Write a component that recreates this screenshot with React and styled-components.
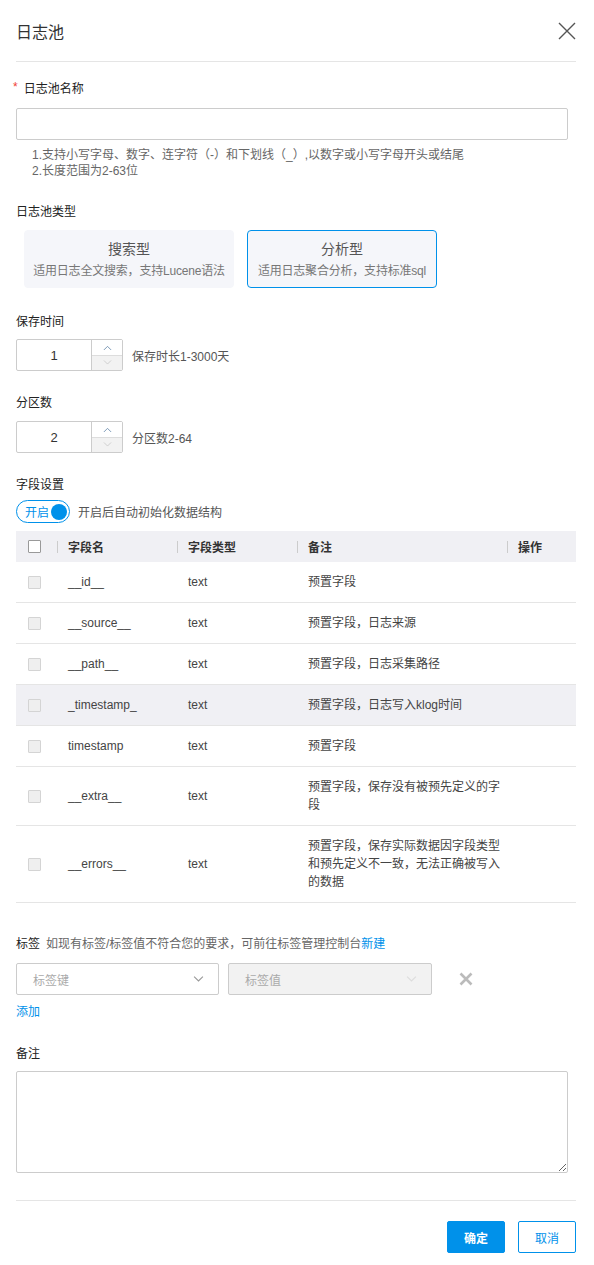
import React from "react";
import styled, { createGlobalStyle } from "styled-components";

const BLUE = "#0091ea";

const GlobalStyle = createGlobalStyle`
  html, body {
    margin: 0;
    padding: 0;
    background: #fff;
  }
  body {
    font-family: "Liberation Sans", "Noto Sans CJK SC", sans-serif;
    font-size: 12px;
    color: #333;
  }
  * {
    box-sizing: border-box;
  }
`;

const Dialog = styled.div`
  width: 594px;
  padding: 0 18px 13px 16px;
`;

const Header = styled.div`
  height: 62px;
  display: flex;
  align-items: center;
  justify-content: space-between;
  border-bottom: 1px solid #e5e5e5;
`;

const Title = styled.h2`
  margin: 0;
  font-size: 16px;
  font-weight: normal;
  color: #333;
`;

const CloseButton = styled.button`
  border: 0;
  background: none;
  padding: 0;
  margin-right: -2px;
  width: 22px;
  height: 22px;
  display: flex;
  align-items: center;
  justify-content: center;
  cursor: pointer;
`;

const Body = styled.div`
  padding-top: 18px;
`;

const FormItem = styled.div`
  margin-top: ${({ $gap }) => $gap || 0}px;
`;

const Label = styled.div`
  line-height: 18px;
  font-size: 12px;
  color: #222;
  margin-bottom: ${({ $mb }) => $mb ?? 9}px;
  display: flex;
  align-items: center;
`;

const Required = styled.span`
  color: #f04134;
  margin-left: -3px;
  margin-right: 6px;
  font-size: 12px;
  position: relative;
  top: -2px;
`;

const TextInput = styled.input`
  display: block;
  width: 552px;
  height: 32px;
  border: 1px solid #ccc;
  border-radius: 2px;
  outline: none;
  padding: 0 10px;
  font: inherit;
`;

const Help = styled.div`
  margin-top: 7px;
  padding-left: 16px;
  color: #666;
  line-height: 16px;
`;

const Cards = styled.div`
  display: flex;
  gap: 13px;
  padding-left: 8px;
`;

const TypeCard = styled.div`
  width: ${({ $w }) => $w}px;
  height: 58px;
  padding: 0 4px;
  border-radius: 4px;
  background: #f5f6fa;
  border: 1px solid ${({ $active }) => ($active ? BLUE : "#f5f6fa")};
  display: flex;
  flex-direction: column;
  align-items: center;
  justify-content: center;
  gap: 5px;
  white-space: nowrap;
`;

const CardTitle = styled.div`
  font-size: 14px;
  color: #555;
  line-height: 18px;
`;

const CardDesc = styled.div`
  font-size: 12px;
  color: #777;
  line-height: 16px;
  letter-spacing: -0.2px;
`;

const InlineRow = styled.div`
  display: flex;
  align-items: center;
  gap: ${({ $gap }) => $gap || 9}px;
`;

const NumberBox = styled.div`
  width: 107px;
  height: 32px;
  border: 1px solid #ccc;
  border-radius: 2px;
  display: flex;
`;

const NumberValue = styled.div`
  flex: 1;
  display: flex;
  align-items: center;
  justify-content: center;
  font-size: 13px;
  color: #333;
`;

const Spinner = styled.div`
  width: 31px;
  border-left: 1px solid #ccc;
  display: flex;
  flex-direction: column;
`;

const SpinBtn = styled.div`
  flex: 1;
  display: flex;
  align-items: center;
  justify-content: center;
  background: ${({ $disabled }) => ($disabled ? "#f2f2f2" : "#fff")};
  & + & {
    border-top: 1px solid #ddd;
  }
`;

const Hint = styled.span`
  color: #555;
  font-size: 12px;
`;

const Switch = styled.div`
  width: 54px;
  height: 23px;
  border: 1px solid ${BLUE};
  border-radius: 12px;
  display: flex;
  align-items: center;
  justify-content: space-between;
  padding: 0 2px 0 8px;
  color: ${BLUE};
  font-size: 12px;
`;

const Knob = styled.span`
  width: 16px;
  height: 16px;
  border-radius: 50%;
  background: ${BLUE};
`;

const Table = styled.table`
  margin-top: 8px;
  width: 560px;
  border-collapse: collapse;
  table-layout: fixed;
`;

const Col = styled.col`
  width: ${({ $w }) => $w}px;
`;

const Th = styled.th`
  height: 31px;
  background: #f0f0f4;
  text-align: left;
  font-weight: bold;
  color: #333;
  padding: 0 0 0 11px;
  position: relative;
  &::before {
    content: "";
    position: absolute;
    left: 0;
    top: 10px;
    height: 12px;
    border-left: 1px solid #ccc;
  }
  &:first-child {
    padding-left: 12px;
  }
  &:first-child::before {
    display: none;
  }
`;

const Tr = styled.tr`
  background: ${({ $hover }) => ($hover ? "#f0f0f4" : "#fff")};
  border-bottom: 1px solid #e5e5e5;
`;

const Td = styled.td`
  padding: 11px 0 11px 11px;
  line-height: 18px;
  color: #444;
  vertical-align: middle;
  &:first-child {
    padding-left: 12px;
  }
`;

const Desc = styled.div`
  width: 196px;
`;

const Checkbox = styled.span`
  display: block;
  width: 13px;
  height: 13px;
  border: 1px solid ${({ $disabled }) => ($disabled ? "#d4d4d4" : "#999")};
  background: ${({ $disabled }) => ($disabled ? "#efefef" : "#fff")};
  border-radius: 1px;
`;

const TagLabel = styled.div`
  line-height: 18px;
  margin-bottom: 10px;
  color: #222;
`;

const TagHint = styled.span`
  color: #666;
  margin-left: 6px;
`;

const Link = styled.a`
  color: ${BLUE};
  text-decoration: none;
  cursor: pointer;
`;

const Select = styled.div`
  width: ${({ $w }) => $w}px;
  height: 32px;
  border: 1px solid #ccc;
  border-radius: 2px;
  background: ${({ $disabled }) => ($disabled ? "#f2f2f2" : "#fff")};
  display: flex;
  align-items: center;
  justify-content: space-between;
  padding: 0 14px 0 16px;
  color: #aaa;
  font-size: 12px;
`;

const RemoveBtn = styled.span`
  margin-left: 18px;
  display: flex;
  align-items: center;
`;

const AddLink = styled(Link)`
  display: block;
  margin-top: 8px;
  line-height: 18px;
`;

const TextArea = styled.textarea`
  display: block;
  width: 552px;
  height: 102px;
  border: 1px solid #ccc;
  border-radius: 2px;
  outline: none;
  font: inherit;
  padding: 6px 10px;
  resize: vertical;
`;

const Footer = styled.div`
  margin-top: 27px;
  border-top: 1px solid #e5e5e5;
  padding-top: 20px;
  display: flex;
  justify-content: flex-end;
  gap: 13px;
`;

const Button = styled.button`
  width: 58px;
  height: 32px;
  border-radius: 2px;
  font: inherit;
  font-size: 12px;
  cursor: pointer;
  border: 1px solid ${BLUE};
  background: ${({ $primary }) => ($primary ? BLUE : "#fff")};
  color: ${({ $primary }) => ($primary ? "#fff" : BLUE)};
  font-weight: ${({ $primary }) => ($primary ? "bold" : "normal")};
`;

const Chevron = ({ up, color = "#aaa", size = 10 }) => (
  <svg width={size} height={size * 0.6} viewBox="0 0 10 6">
    <path
      d={up ? "M1 5.5 L5 1.5 L9 5.5" : "M1 0.5 L5 4.5 L9 0.5"}
      fill="none"
      stroke={color}
      strokeWidth="1"
    />
  </svg>
);

const NumberInput = ({ value }) => (
  <NumberBox>
    <NumberValue>{value}</NumberValue>
    <Spinner>
      <SpinBtn>
        <Chevron up color="#6f8fb0" size={9} />
      </SpinBtn>
      <SpinBtn $disabled>
        <Chevron color="#ccc" size={9} />
      </SpinBtn>
    </Spinner>
  </NumberBox>
);

const fields = [
  { name: "__id__", desc: "预置字段" },
  { name: "__source__", desc: "预置字段，日志来源" },
  { name: "__path__", desc: "预置字段，日志采集路径" },
  { name: "_timestamp_", desc: "预置字段，日志写入klog时间", hover: true },
  { name: "timestamp", desc: "预置字段" },
  { name: "__extra__", desc: "预置字段，保存没有被预先定义的字段" },
  {
    name: "__errors__",
    desc: "预置字段，保存实际数据因字段类型和预先定义不一致，无法正确被写入的数据",
  },
];

const columns = [41, 120, 120, 210, 69];

export default function App() {
  return (
    <>
      <GlobalStyle />
      <Dialog>
        <Header>
          <Title>日志池</Title>
          <CloseButton aria-label="关闭">
            <svg width="18" height="18" viewBox="0 0 18 18">
              <path
                d="M1 1 L17 17 M17 1 L1 17"
                stroke="#555"
                strokeWidth="1.4"
                fill="none"
              />
            </svg>
          </CloseButton>
        </Header>

        <Body>
          <FormItem>
            <Label $mb={10}>
              <Required>*</Required>日志池名称
            </Label>
            <TextInput />
            <Help>
              <div>1.支持小写字母、数字、连字符（-）和下划线（_）,以数字或小写字母开头或结尾</div>
              <div>2.长度范围为2-63位</div>
            </Help>
          </FormItem>

          <FormItem $gap={24}>
            <Label>日志池类型</Label>
            <Cards>
              <TypeCard $w={210}>
                <CardTitle>搜索型</CardTitle>
                <CardDesc>适用日志全文搜索，支持Lucene语法</CardDesc>
              </TypeCard>
              <TypeCard $w={190} $active>
                <CardTitle>分析型</CardTitle>
                <CardDesc>适用日志聚合分析，支持标准sql</CardDesc>
              </TypeCard>
            </Cards>
          </FormItem>

          <FormItem $gap={25}>
            <Label $mb={8}>保存时间</Label>
            <InlineRow>
              <NumberInput value="1" />
              <Hint>保存时长1-3000天</Hint>
            </InlineRow>
          </FormItem>

          <FormItem $gap={23}>
            <Label $mb={9}>分区数</Label>
            <InlineRow>
              <NumberInput value="2" />
              <Hint>分区数2-64</Hint>
            </InlineRow>
          </FormItem>

          <FormItem $gap={23}>
            <Label $mb={6}>字段设置</Label>
            <InlineRow $gap={8}>
              <Switch>
                开启
                <Knob />
              </Switch>
              <Hint>开启后自动初始化数据结构</Hint>
            </InlineRow>
            <Table>
              <colgroup>
                {columns.map((w, i) => (
                  <Col key={i} $w={w} />
                ))}
              </colgroup>
              <thead>
                <tr>
                  <Th>
                    <Checkbox />
                  </Th>
                  <Th>字段名</Th>
                  <Th>字段类型</Th>
                  <Th>备注</Th>
                  <Th>操作</Th>
                </tr>
              </thead>
              <tbody>
                {fields.map((f) => (
                  <Tr key={f.name} $hover={f.hover}>
                    <Td>
                      <Checkbox $disabled />
                    </Td>
                    <Td>{f.name}</Td>
                    <Td>text</Td>
                    <Td>
                      <Desc>{f.desc}</Desc>
                    </Td>
                    <Td />
                  </Tr>
                ))}
              </tbody>
            </Table>
          </FormItem>

          <FormItem $gap={32}>
            <TagLabel>
              标签
              <TagHint>
                如现有标签/标签值不符合您的要求，可前往标签管理控制台
                <Link>新建</Link>
              </TagHint>
            </TagLabel>
            <InlineRow $gap={9}>
              <Select $w={203}>
                标签键
                <Chevron color="#999" size={11} />
              </Select>
              <Select $w={204} $disabled>
                标签值
                <Chevron color="#ddd" size={11} />
              </Select>
              <RemoveBtn>
                <svg width="14" height="14" viewBox="0 0 14 14">
                  <path
                    d="M1.5 1.5 L12.5 12.5 M12.5 1.5 L1.5 12.5"
                    stroke="#bbb"
                    strokeWidth="2.6"
                    fill="none"
                  />
                </svg>
              </RemoveBtn>
            </InlineRow>
            <AddLink>添加</AddLink>
          </FormItem>

          <FormItem $gap={24}>
            <Label $mb={8}>备注</Label>
            <TextArea />
          </FormItem>
        </Body>

        <Footer>
          <Button $primary>确定</Button>
          <Button>取消</Button>
        </Footer>
      </Dialog>
    </>
  );
}
